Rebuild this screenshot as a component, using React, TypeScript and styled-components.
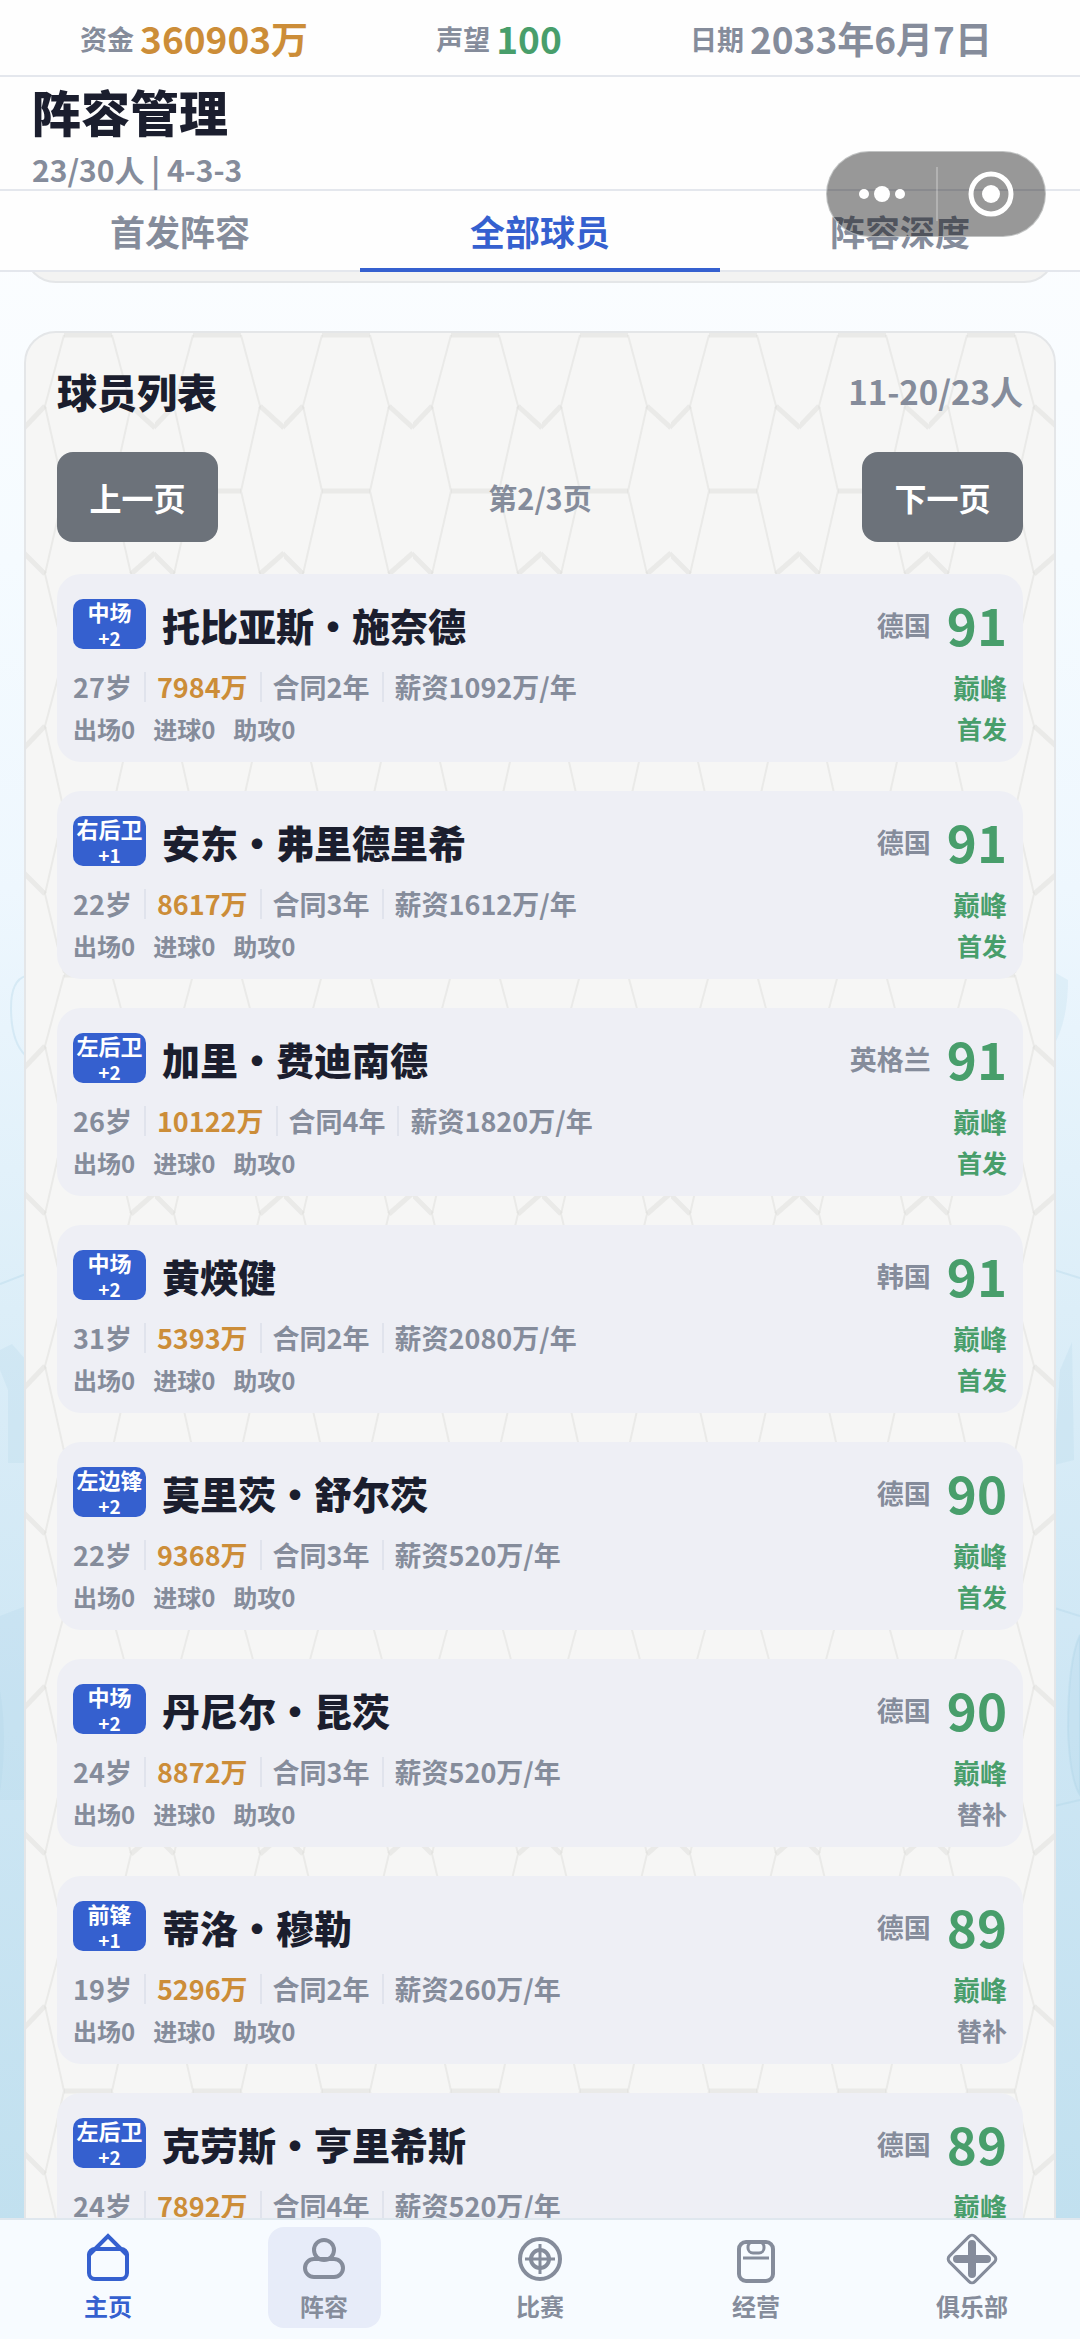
import React, { useState } from "react";
import styled, { createGlobalStyle } from "styled-components";

const ink = "#1b1e2e";
const muted = "#858c9b";
const blue = "#3560cf";
const green = "#489e6b";
const gold = "#cc8d38";
const line = "#e4e7ed";

const hexTile = encodeURIComponent(
  `<svg xmlns="http://www.w3.org/2000/svg" width="129" height="320" viewBox="0 0 129 320"><g fill="none" stroke="#d8d8d6" stroke-opacity=".42" stroke-linejoin="round"><path stroke-width="5" d="M38 2H86M38 158H86M-2 95L19 73M105 73L129 95M-2 220L19 241M105 241L129 220M38 322H86"/><path stroke-width="2" d="M38 2L19 73L38 158L19 241L38 320M86 2L105 73L86 158L105 241L86 320"/></g></svg>`
);

const GlobalStyle = createGlobalStyle`
  * { box-sizing: border-box; }
  body { margin: 0; }
  body, button {
    font-family: "Noto Sans CJK SC", "Noto Sans", sans-serif;
    font-weight: 700;
  }
  button { border: 0; background: none; padding: 0; cursor: pointer; }
  h1, h2, h3, p, ul, dl, dd { margin: 0; padding: 0; }
  ul { list-style: none; }
`;

const Screen = styled.div`
  position: relative;
  height: 100vh;
  display: flex;
  flex-direction: column;
  overflow: hidden;
  color: ${muted};
  background: linear-gradient(#fbfdff 10%, #f5fbff 24%, #eef7fe 38%, #dceef8 56%, #cde6f4 74%, #c1e0ef 95%);
`;

const Backdrop = styled.svg<{ $side: "left" | "right" }>`
  position: absolute;
  ${(p) => p.$side}: 0;
  top: 900px;
  width: 26px;
  height: 1200px;
  fill: #a9d0e6;
  stroke: #a9d0e6;
  stroke-width: 2;
  fill-opacity: 0.2;
  stroke-opacity: 0.3;
`;

const StatusBar = styled.dl`
  position: relative;
  display: flex;
  justify-content: space-around;
  height: 77px;
  padding: 18px 24px 0 16px;
  background: #fefefe;
  border-bottom: 2px solid ${line};
`;

const Stat = styled.div`
  display: flex;
  align-items: center;
  gap: 6px;
  height: 40px;
`;

const StatLabel = styled.dt`
  font-size: 27px;
`;

const StatValue = styled.dd<{ $color: string }>`
  font-size: 37px;
  line-height: 40px;
  color: ${(p) => p.$color};
`;

const PageHeader = styled.header`
  position: relative;
  height: 114px;
  padding: 5px 32px 0;
  background: #fefefe;
  border-bottom: 2px solid ${line};
`;

const PageTitle = styled.h1`
  font-size: 49px;
  line-height: 58px;
  font-weight: 900;
  color: ${ink};
`;

const PageMeta = styled.p`
  font-size: 30px;
  line-height: 58px;
`;

const Tabs = styled.nav`
  position: relative;
  display: grid;
  grid-template-columns: repeat(3, 1fr);
  height: 81px;
  background: #fefefe;
  border-bottom: 2px solid ${line};
`;

const Tab = styled.button<{ $active: boolean }>`
  height: 81px;
  font-size: 35px;
  line-height: 76px;
  padding-top: 2px;
  color: ${(p) => (p.$active ? blue : muted)};
  border-bottom: 4px solid ${(p) => (p.$active ? blue : "transparent")};
`;

const Capsule = styled.div`
  position: absolute;
  top: 151px;
  right: 34px;
  display: grid;
  grid-template-columns: 1fr 1fr;
  width: 220px;
  height: 86px;
  border: 1px solid rgba(210, 212, 212, 0.7);
  border-radius: 43px;
  background: rgba(0, 0, 0, 0.4);
`;

const CapsuleButton = styled.button`
  display: grid;
  place-items: center;
  color: #fff;

  & + & {
    position: relative;
  }
  & + &::before {
    content: "";
    position: absolute;
    left: 0;
    top: 15px;
    width: 2px;
    height: 54px;
    background: rgba(255, 255, 255, 0.25);
  }
`;

const Content = styled.main`
  position: relative;
  flex: 1;
  min-height: 0;
  overflow: hidden;
  padding: 0 24px;
`;

const Panel = styled.section`
  border: 2px solid #e4e6e8;
  border-radius: 32px;
  background: #f6f6f5 url("data:image/svg+xml,${hexTile}") 0 0 / 129px 320px;
`;

const PreviousPanel = styled(Panel)`
  height: 80px;
  margin: -69px 0 48px;
  background: #f3f3f2;
`;

const ListPanel = styled(Panel)`
  padding: 30px 31px;
`;

const ListHeader = styled.div`
  display: flex;
  align-items: center;
  justify-content: space-between;
  height: 56px;
  font-size: 33px;
`;

const ListTitle = styled.h2`
  font-size: 40px;
  font-weight: 900;
  color: ${ink};
`;

const Pager = styled.div`
  display: flex;
  align-items: center;
  justify-content: space-between;
  margin: 33px 0 32px;
  font-size: 29px;
`;

const PageButton = styled.button`
  width: 161px;
  height: 90px;
  border-radius: 16px;
  background: #6c727a;
  color: #fff;
  font-size: 32px;
`;

const PlayerList = styled.ul`
  display: grid;
  gap: 29px;
`;

const PlayerCard = styled.li`
  height: 188px;
  padding: 24px 16px 0;
  border-radius: 24px;
  background: #eeeff5;
`;

const Row = styled.div<{ $height: number }>`
  display: flex;
  align-items: center;
  height: ${(p) => p.$height}px;
`;

const Position = styled.span`
  display: flex;
  flex-direction: column;
  align-items: center;
  width: 73px;
  height: 50px;
  margin-right: 16px;
  border-radius: 10px;
  background: ${blue};
  color: #fff;
  font-size: 22px;
  line-height: 24px;
  white-space: nowrap;
`;

const Bonus = styled.span`
  font-size: 19px;
  line-height: 30px;
`;

const PlayerName = styled.h3`
  flex: 1;
  font-size: 38px;
  font-weight: 900;
  color: ${ink};
`;

const Country = styled.span`
  font-size: 27px;
  margin-right: 16px;
`;

const Rating = styled.span`
  font-size: 51px;
  color: ${green};
`;

const Facts = styled.div`
  flex: 1;
  display: flex;
  font-size: 27px;
  line-height: 30px;
`;

const Fact = styled.span<{ $gold?: boolean }>`
  color: ${(p) => (p.$gold ? gold : muted)};

  & + & {
    margin-left: 12px;
    padding-left: 11px;
    border-left: 2px solid #e0e3ec;
  }
`;

const Totals = styled.div`
  flex: 1;
  display: flex;
  gap: 18px;
  font-size: 24px;
`;

const Tag = styled.span<{ $size: number; $good: boolean }>`
  font-size: ${(p) => p.$size}px;
  color: ${(p) => (p.$good ? green : muted)};
`;

const BottomNav = styled.nav`
  position: relative;
  display: grid;
  grid-template-columns: repeat(5, 1fr);
  justify-items: center;
  height: 121px;
  padding-top: 7px;
  background: #f7fbff;
  border-top: 2px solid #dfe7ee;
`;

const NavItem = styled.button<{ $current: boolean; $pressed: boolean }>`
  display: flex;
  flex-direction: column;
  align-items: center;
  width: 113px;
  height: 101px;
  padding-top: 2px;
  border-radius: 16px;
  background: ${(p) => (p.$pressed ? "#e7ecf9" : "transparent")};
  color: ${(p) => (p.$current ? blue : muted)};
  font-size: 24px;
  line-height: 34px;
`;

const Icon = styled.svg`
  display: block;
  width: 60px;
  height: 60px;
  fill: none;
  stroke: currentColor;
  stroke-width: 4;
  stroke-linecap: round;
  stroke-linejoin: round;
`;

const icons: Record<string, React.ReactNode> = {
  home: (
    <>
      <rect x="11" y="20" width="38" height="30" rx="6" />
      <path d="M11 26L30 7L49 26" strokeLinejoin="miter" />
    </>
  ),
  squad: (
    <>
      <circle cx="30" cy="21" r="10" />
      <rect x="11" y="30" width="38" height="18" rx="9" />
    </>
  ),
  match: (
    <>
      <circle cx="30" cy="30" r="20" />
      <circle cx="30" cy="30" r="9" />
      <path d="M30 15V45M15 30H45" strokeWidth="3" strokeLinecap="butt" />
    </>
  ),
  business: (
    <>
      <rect x="13" y="13" width="34" height="39" rx="7" />
      <rect x="22" y="13" width="16" height="11" rx="5" strokeWidth="3" />
      <path d="M17 29H43" strokeWidth="3" strokeLinecap="butt" />
    </>
  ),
  club: (
    <>
      <rect x="12" y="12" width="36" height="36" rx="4" strokeWidth="3" transform="rotate(45 30 30)" />
      <path d="M30 15V45M15 30H45" strokeWidth="8" />
    </>
  ),
};

const navItems = [
  { id: "home", label: "主页" },
  { id: "squad", label: "阵容" },
  { id: "match", label: "比赛" },
  { id: "business", label: "经营" },
  { id: "club", label: "俱乐部" },
];

const tabs = ["首发阵容", "全部球员", "阵容深度"];

interface Player {
  position: string;
  bonus: number;
  name: string;
  country: string;
  rating: number;
  age: number;
  value: number;
  contract: number;
  wage: number;
  starter: boolean;
}

const players: Player[] = [
  { position: "中场", bonus: 2, name: "托比亚斯・施奈德", country: "德国", rating: 91, age: 27, value: 7984, contract: 2, wage: 1092, starter: true },
  { position: "右后卫", bonus: 1, name: "安东・弗里德里希", country: "德国", rating: 91, age: 22, value: 8617, contract: 3, wage: 1612, starter: true },
  { position: "左后卫", bonus: 2, name: "加里・费迪南德", country: "英格兰", rating: 91, age: 26, value: 10122, contract: 4, wage: 1820, starter: true },
  { position: "中场", bonus: 2, name: "黄煐健", country: "韩国", rating: 91, age: 31, value: 5393, contract: 2, wage: 2080, starter: true },
  { position: "左边锋", bonus: 2, name: "莫里茨・舒尔茨", country: "德国", rating: 90, age: 22, value: 9368, contract: 3, wage: 520, starter: true },
  { position: "中场", bonus: 2, name: "丹尼尔・昆茨", country: "德国", rating: 90, age: 24, value: 8872, contract: 3, wage: 520, starter: false },
  { position: "前锋", bonus: 1, name: "蒂洛・穆勒", country: "德国", rating: 89, age: 19, value: 5296, contract: 2, wage: 260, starter: false },
  { position: "左后卫", bonus: 2, name: "克劳斯・亨里希斯", country: "德国", rating: 89, age: 24, value: 7892, contract: 4, wage: 520, starter: false },
];

function PlayerItem({ player }: { player: Player }) {
  return (
    <PlayerCard>
      <Row $height={52}>
        <Position>
          {player.position}
          <Bonus>+{player.bonus}</Bonus>
        </Position>
        <PlayerName>{player.name}</PlayerName>
        <Country>{player.country}</Country>
        <Rating>{player.rating}</Rating>
      </Row>
      <Row $height={74}>
        <Facts>
          <Fact>{player.age}岁</Fact>
          <Fact $gold>{player.value}万</Fact>
          <Fact>合同{player.contract}年</Fact>
          <Fact>薪资{player.wage}万/年</Fact>
        </Facts>
        <Tag $size={27} $good>巅峰</Tag>
      </Row>
      <Row $height={8}>
        <Totals>
          <span>出场0</span>
          <span>进球0</span>
          <span>助攻0</span>
        </Totals>
        <Tag $size={25} $good={player.starter}>{player.starter ? "首发" : "替补"}</Tag>
      </Row>
    </PlayerCard>
  );
}

export default function App() {
  const [tab, setTab] = useState(1);
  return (
    <Screen>
      <GlobalStyle />
      <Backdrop $side="left" viewBox="0 0 26 1200" aria-hidden="true">
        <path d="M26 76Q11 80 11 108Q11 142 26 156" fill="none" />
        <path d="M0 384L26 374" fill="none" />
        <path d="M0 450L12 444L26 460V563H8V490L0 470Z" stroke="none" />
        <path d="M0 716L26 706V900H0Z" stroke="none" />
        <path d="M0 790Q8 840 0 892Z" stroke="none" />
      </Backdrop>
      <Backdrop $side="right" viewBox="0 0 26 1200" aria-hidden="true">
        <path d="M0 72L14 80Q14 120 0 145Z" stroke="none" />
        <path d="M0 370L26 378M0 708L26 716M0 906L26 900" fill="none" />
        <path d="M0 565L6 470L18 442L20 560Z" stroke="none" />
        <path d="M26 735Q14 760 14 830Q16 880 26 895Z" />
      </Backdrop>
      <StatusBar>
        <Stat>
          <StatLabel>资金</StatLabel>
          <StatValue $color={gold}>360903万</StatValue>
        </Stat>
        <Stat>
          <StatLabel>声望</StatLabel>
          <StatValue $color={green}>100</StatValue>
        </Stat>
        <Stat>
          <StatLabel>日期</StatLabel>
          <StatValue $color={muted}>2033年6月7日</StatValue>
        </Stat>
      </StatusBar>
      <PageHeader>
        <PageTitle>阵容管理</PageTitle>
        <PageMeta>23/30人 | 4-3-3</PageMeta>
      </PageHeader>
      <Tabs>
        {tabs.map((label, i) => (
          <Tab key={label} $active={i === tab} onClick={() => setTab(i)}>
            {label}
          </Tab>
        ))}
      </Tabs>
      <Content>
        <PreviousPanel />
        <ListPanel>
          <ListHeader>
            <ListTitle>球员列表</ListTitle>
            <span>11-20/23人</span>
          </ListHeader>
          <Pager>
            <PageButton>上一页</PageButton>
            <span>第2/3页</span>
            <PageButton>下一页</PageButton>
          </Pager>
          <PlayerList>
            {players.map((p) => (
              <PlayerItem key={p.name} player={p} />
            ))}
          </PlayerList>
        </ListPanel>
      </Content>
      <BottomNav>
        {navItems.map(({ id, label }) => (
          <NavItem key={id} $current={id === "home"} $pressed={id === "squad"}>
            <Icon viewBox="0 0 60 60" aria-hidden="true">
              {icons[id]}
            </Icon>
            {label}
          </NavItem>
        ))}
      </BottomNav>
      <Capsule>
        <CapsuleButton aria-label="更多">
          <svg width="48" height="18" viewBox="0 0 48 18" fill="currentColor" aria-hidden="true">
            <circle cx="6" cy="9" r="5" />
            <circle cx="24" cy="9" r="8" />
            <circle cx="42" cy="9" r="5" />
          </svg>
        </CapsuleButton>
        <CapsuleButton aria-label="关闭">
          <svg width="46" height="46" viewBox="0 0 46 46" fill="none" aria-hidden="true">
            <circle cx="23" cy="23" r="20" stroke="currentColor" strokeWidth="5" />
            <circle cx="23" cy="23" r="9" fill="currentColor" />
          </svg>
        </CapsuleButton>
      </Capsule>
    </Screen>
  );
}
